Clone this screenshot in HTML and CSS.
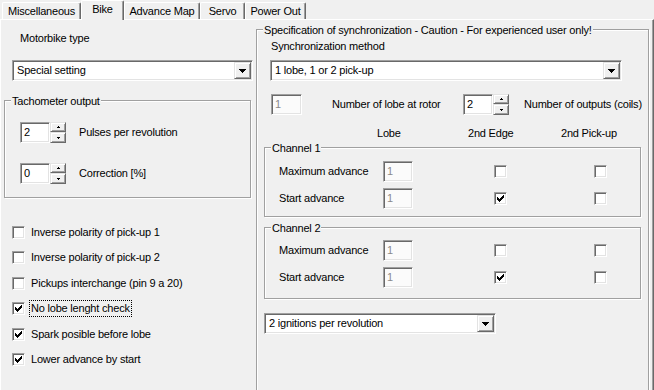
FILE: index.html
```html
<!DOCTYPE html>
<html>
<head>
<meta charset="utf-8">
<link rel="stylesheet" href="styles.css">
</head>
<body>
<div class="window">
  <div class="tabs">
    <div class="tab tab-misc">Miscellaneous</div>
    <div class="tab tab-bike active">Bike</div>
    <div class="tab tab-adv">Advance Map</div>
    <div class="tab tab-servo">Servo</div>
    <div class="tab tab-power">Power Out</div>
  </div>
  <div class="page">
    <div class="left">
      <div class="motor-lbl">Motorbike type</div>
      <div class="combo combo-motor">
        <span class="combo-text">Special setting</span>
        <span class="drop"><svg width="7" height="4" viewBox="0 0 7 4"><path d="M0 0h7v1H0zM1 1h5v1H1zM2 2h3v1H2zM3 3h1v1H3z" fill="#000"/></svg></span>
      </div>
      <div class="group tach">
        <div class="group-title">Tachometer output</div>
        <div class="spin-row first">
          <div class="spin">
            <div class="edit">2</div>
            <div class="sbtns">
              <div class="sbtn up"><svg width="3" height="2" viewBox="0 0 3 2"><path d="M1 0h1v1H1zM0 1h3v1H0z" fill="#000"/></svg></div>
              <div class="sbtn dn"><svg width="3" height="2" viewBox="0 0 3 2"><path d="M0 0h3v1H0zM1 1h1v1H1z" fill="#000"/></svg></div>
            </div>
          </div>
          <span class="spin-lbl">Pulses per revolution</span>
        </div>
        <div class="spin-row second">
          <div class="spin">
            <div class="edit">0</div>
            <div class="sbtns">
              <div class="sbtn up"><svg width="3" height="2" viewBox="0 0 3 2"><path d="M1 0h1v1H1zM0 1h3v1H0z" fill="#000"/></svg></div>
              <div class="sbtn dn"><svg width="3" height="2" viewBox="0 0 3 2"><path d="M0 0h3v1H0zM1 1h1v1H1z" fill="#000"/></svg></div>
            </div>
          </div>
          <span class="spin-lbl">Correction [%]</span>
        </div>
      </div>
      <div class="checks">
        <div class="chk-row"><span class="chk"></span><span class="chk-lbl">Inverse polarity of pick-up 1</span></div>
        <div class="chk-row"><span class="chk"></span><span class="chk-lbl">Inverse polarity of pick-up 2</span></div>
        <div class="chk-row"><span class="chk"></span><span class="chk-lbl">Pickups interchange (pin 9 a 20)</span></div>
        <div class="chk-row"><span class="chk"><svg width="7" height="7" viewBox="0 0 7 7"><path d="M6 0h1v1H6zM5 1h2v1H5zM0 2h1v1H0zM4 2h3v1H4zM0 3h2v1H0zM3 3h3v1H3zM0 4h5v1H0zM1 5h3v1H1zM2 6h1v1H2z" fill="#000"/></svg></span><span class="chk-lbl focus">No lobe lenght check</span></div>
        <div class="chk-row"><span class="chk"><svg width="7" height="7" viewBox="0 0 7 7"><path d="M6 0h1v1H6zM5 1h2v1H5zM0 2h1v1H0zM4 2h3v1H4zM0 3h2v1H0zM3 3h3v1H3zM0 4h5v1H0zM1 5h3v1H1zM2 6h1v1H2z" fill="#000"/></svg></span><span class="chk-lbl">Spark posible before lobe</span></div>
        <div class="chk-row"><span class="chk"><svg width="7" height="7" viewBox="0 0 7 7"><path d="M6 0h1v1H6zM5 1h2v1H5zM0 2h1v1H0zM4 2h3v1H4zM0 3h2v1H0zM3 3h3v1H3zM0 4h5v1H0zM1 5h3v1H1zM2 6h1v1H2z" fill="#000"/></svg></span><span class="chk-lbl">Lower advance by start</span></div>
      </div>
    </div>

    <div class="group sync">
      <div class="group-title">Specification of synchronization - Caution - For experienced user only!</div>
      <div class="sync-lbl">Synchronization method</div>
      <div class="combo combo-sync">
        <span class="combo-text">1 lobe, 1 or 2 pick-up</span>
        <span class="drop"><svg width="7" height="4" viewBox="0 0 7 4"><path d="M0 0h7v1H0zM1 1h5v1H1zM2 2h3v1H2zM3 3h1v1H3z" fill="#000"/></svg></span>
      </div>
      <div class="lobe-row">
        <div class="edit disabled lobe-edit">1</div>
        <span class="lobe-lbl">Number of lobe at rotor</span>
        <div class="spin">
          <div class="edit">2</div>
          <div class="sbtns">
            <div class="sbtn up"><svg width="3" height="2" viewBox="0 0 3 2"><path d="M1 0h1v1H1zM0 1h3v1H0z" fill="#000"/></svg></div>
            <div class="sbtn dn"><svg width="3" height="2" viewBox="0 0 3 2"><path d="M0 0h3v1H0zM1 1h1v1H1z" fill="#000"/></svg></div>
          </div>
        </div>
        <span class="out-lbl">Number of outputs (coils)</span>
      </div>
      <div class="head-row">
        <span class="h-lobe">Lobe</span>
        <span class="h-edge">2nd Edge</span>
        <span class="h-pick">2nd Pick-up</span>
      </div>
      <div class="group channel ch1">
        <div class="group-title">Channel 1</div>
        <div class="ch-row r1">
          <span class="ch-lbl">Maximum advance</span>
          <div class="edit disabled">1</div>
          <span class="chk edge"></span>
          <span class="chk pick"></span>
        </div>
        <div class="ch-row r2">
          <span class="ch-lbl">Start advance</span>
          <div class="edit disabled">1</div>
          <span class="chk edge"><svg width="7" height="7" viewBox="0 0 7 7"><path d="M6 0h1v1H6zM5 1h2v1H5zM0 2h1v1H0zM4 2h3v1H4zM0 3h2v1H0zM3 3h3v1H3zM0 4h5v1H0zM1 5h3v1H1zM2 6h1v1H2z" fill="#000"/></svg></span>
          <span class="chk pick"></span>
        </div>
      </div>
      <div class="group channel ch2">
        <div class="group-title">Channel 2</div>
        <div class="ch-row r1">
          <span class="ch-lbl">Maximum advance</span>
          <div class="edit disabled">1</div>
          <span class="chk edge"></span>
          <span class="chk pick"></span>
        </div>
        <div class="ch-row r2">
          <span class="ch-lbl">Start advance</span>
          <div class="edit disabled">1</div>
          <span class="chk edge"><svg width="7" height="7" viewBox="0 0 7 7"><path d="M6 0h1v1H6zM5 1h2v1H5zM0 2h1v1H0zM4 2h3v1H4zM0 3h2v1H0zM3 3h3v1H3zM0 4h5v1H0zM1 5h3v1H1zM2 6h1v1H2z" fill="#000"/></svg></span>
          <span class="chk pick"></span>
        </div>
      </div>
      <div class="combo combo-ign">
        <span class="combo-text">2 ignitions per revolution</span>
        <span class="drop"><svg width="7" height="4" viewBox="0 0 7 4"><path d="M0 0h7v1H0zM1 1h5v1H1zM2 2h3v1H2zM3 3h1v1H3z" fill="#000"/></svg></span>
      </div>
    </div>
  </div>
</div>
</body>
</html>
```

FILE: styles.css
```css
* { box-sizing: border-box; }
html, body { margin: 0; padding: 0; }
body {
  width: 654px;
  height: 390px;
  overflow: hidden;
  background: #f0f0f0;
  font-family: "Liberation Sans", Arial, sans-serif;
  font-size: 11px;
  line-height: 13px;
  letter-spacing: -0.2px;
  color: #000;
}
svg { display: block; shape-rendering: crispEdges; }

.window { width: 654px; height: 390px; }

/* Tabs */
.tabs {
  display: flex;
  align-items: flex-end;
  height: 19px;
  padding-left: 2px;
}
.tab {
  height: 17px;
  border-top: 1px solid #fff;
  border-left: 1px solid #fff;
  border-right: 1px solid #696969;
  box-shadow: inset -1px 0 0 #a0a0a0;
  border-radius: 2px 2px 0 0;
  text-align: center;
  line-height: 16px;
  white-space: nowrap;
}
.tab-misc { width: 79px; }
.tab-bike { width: 43px; }
.tab-adv { width: 76px; }
.tab-servo { width: 45px; }
.tab-power { width: 61px; }
.tab.active {
  height: 20px;
  margin-bottom: -1px;
  line-height: 17px;
  background: #f0f0f0;
  position: relative;
  z-index: 1;
}

/* Page */
.page {
  display: flex;
  height: 371px;
  border-top: 1px solid #fff;
  border-left: 1px solid #fff;
  border-right: 1px solid #696969;
  box-shadow: inset -1px 0 0 #a0a0a0;
}
.left {
  width: 255px;
  flex: none;
}

/* Group boxes */
.group {
  border: 1px solid #a0a0a0;
  box-shadow: inset 1px 1px 0 #fff, 1px 1px 0 #fff;
}
.group-title {
  display: table;
  margin-top: -6px;
  margin-left: 6px;
  padding: 0 1px;
  background: #f0f0f0;
  white-space: nowrap;
}

/* Sunken controls */
.edit, .combo, .chk {
  background: #fff;
  border: 1px solid;
  border-color: #a0a0a0 #fff #fff #a0a0a0;
  box-shadow: inset 1px 1px 0 #696969, inset -1px -1px 0 #e3e3e3;
}
.edit {
  width: 30px;
  height: 21px;
  padding: 3px 0 0 3px;
  line-height: 13px;
  flex: none;
}
.edit.disabled { color: #8a8a8a; background: #fbfbfb; }

.combo {
  display: flex;
  align-items: center;
  height: 21px;
  padding: 1px;
}
.combo-text { flex: 1; padding-left: 3px; white-space: nowrap; }
.drop, .sbtn {
  background: #f0f0f0;
  border: 1px solid;
  border-color: #e3e3e3 #696969 #696969 #e3e3e3;
  box-shadow: inset 1px 1px 0 #fff, inset -1px -1px 0 #a0a0a0;
  display: flex;
  align-items: center;
  justify-content: center;
}
.drop { width: 17px; height: 17px; flex: none; }

/* Spin */
.spin { display: flex; flex: none; }
.sbtns { display: flex; flex-direction: column; width: 16px; }
.sbtn.up { height: 10px; }
.sbtn.dn { height: 11px; }

/* Left column */
.motor-lbl { margin-top: 12px; padding-left: 19px; }
.combo-motor { margin-top: 15px; margin-left: 11px; width: 241px; }
.tach { margin-top: 19px; margin-left: 3px; width: 247px; height: 98px; }
.spin-row { display: flex; align-items: center; padding-left: 15px; }
.spin-row.first { margin-top: 14px; }
.spin-row.second { margin-top: 20px; }
.spin-lbl { margin-left: 13px; white-space: nowrap; }

.checks {
  margin-top: 28px;
  margin-left: 11px;
  display: grid;
  grid-auto-rows: 13px;
  row-gap: 12.4px;
}
.chk-row { display: flex; align-items: center; height: 13px; }
.chk {
  width: 13px;
  height: 13px;
  flex: none;
  display: flex;
  align-items: center;
  justify-content: center;
}
.chk-lbl { margin-left: 6px; white-space: nowrap; }
.chk-lbl.focus {
  border: 1px dotted #000;
  padding: 1px;
  margin: -2px -2px -2px 4px;
}

/* Sync group */
.sync {
  margin-top: 9px;
  width: 393px;
  height: 380px;
  flex: none;
}
.sync-lbl { margin-top: 3px; margin-left: 14px; }
.combo-sync { margin-top: 7px; margin-left: 13px; width: 352px; }
.lobe-row { display: flex; align-items: center; margin-top: 13px; }
.lobe-edit { margin-left: 14px; width: 31px; }
.lobe-lbl { margin-left: 30px; width: 131px; white-space: nowrap; }
.out-lbl { margin-left: 15px; white-space: nowrap; }

.head-row { display: flex; margin-top: 12px; padding-left: 120px; white-space: nowrap; }
.h-lobe { width: 91px; }
.h-edge { width: 93px; }

.channel { margin-left: 7px; width: 377px; padding-bottom: 7px; }
.ch1 { margin-top: 7px; }
.ch2 { margin-top: 10px; padding-bottom: 10px; }
.ch-row { display: flex; align-items: center; }
.ch1 .r1 { margin-top: 6px; }
.ch2 .r1 { margin-top: 5px; }
.ch-row.r2 { margin-top: 6px; }
.ch-lbl { margin-left: 14px; width: 104px; white-space: nowrap; }
.chk.edge { margin-left: 81px; }
.chk.pick { margin-left: 87px; }

.combo-ign { margin-top: 14px; margin-left: 7px; width: 232px; }
```
